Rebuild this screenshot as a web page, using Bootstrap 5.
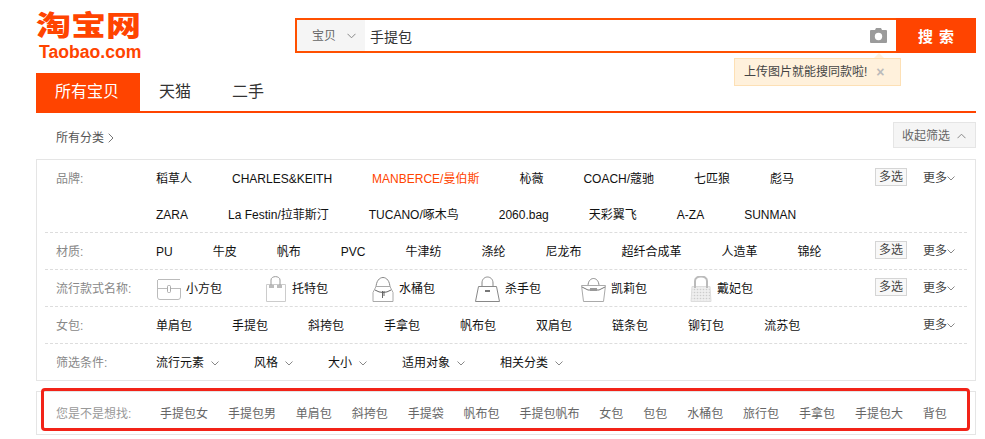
<!doctype html>
<html lang="zh">
<head>
<meta charset="utf-8">
<title>淘宝网</title>
<link href="https://cdn.jsdelivr.net/npm/bootstrap@5.3.0/dist/css/bootstrap.min.css" rel="stylesheet">
<style>
html,body{height:439px;overflow:hidden;background:#fff}
body{font-family:"Liberation Sans","Noto Sans CJK SC",sans-serif;font-size:12px;line-height:16px;color:#222}
.pg{width:940px;margin-left:36px;position:relative}
.top{height:73px;padding-top:13px}
.logo{width:259px;color:#ff4400;flex:none}
.logo-cn{font-family:"Liberation Sans","Noto Sans CJK SC",sans-serif;font-weight:900;font-size:28px;line-height:27px;height:30px;width:106px;white-space:nowrap;transform:scaleX(1.25);transform-origin:0 0}
.logo-en{font-weight:700;font-size:17.6px;line-height:18px;margin:0 0 0 3px}
.srch{height:35px;margin-top:5px;width:681px;border:2px solid #ff5000;border-right:0;position:relative}
.scope{width:68px;background:#f5f5f5;color:#666;padding-left:15px;gap:11px;font-size:12px}
.q{font-size:14px;padding-left:5px;color:#333;flex:1;font-family:"Noto Sans CJK SC",sans-serif}
.cam{margin-right:9px}
.go{width:80px;margin:-2px 0;background:#ff4400;color:#fff;font-weight:700;font-size:15px;letter-spacing:6px;padding-left:6px;font-family:"Noto Sans CJK SC",sans-serif}
.tip{position:absolute;left:437px;top:38px;width:167px;height:28px;background:#fff1dc;border:1px solid #fde0b5;color:#444;padding-left:9px;z-index:2}
.tip:before{content:"";position:absolute;left:139px;top:-6px;border:5px solid transparent;border-top:0;border-bottom:5px solid #fff1dc}
.tip-x{color:#bbb;font-weight:700;font-size:14px;margin-left:9px}
.tabs{height:40px;border-bottom:2px solid #ff4400;font-size:16px;color:#333}
.tab-on{width:104px;height:40px;background:#ff4400;color:#fff;text-align:center;line-height:38px;padding-right:2px}
.tab-it{margin-left:19px;width:32px;line-height:38px;white-space:nowrap}
.tab-it+.tab-it{margin-left:41px}
.crumb{height:46px;padding-left:20px;color:#555}
.crumb-l{padding-top:4px}
.fold{width:83px;height:26px;background:#f5f5f5;border:1px solid #e5e5e5;color:#666;padding:2px 0 0 8px;gap:7px;margin-top:-3px}
.fbox{border:1px solid #e5e5e5;padding:0 8px;height:222px}
.frow{border-bottom:1px dashed #ddd;position:relative}
.frow:last-child{border-bottom:0}
.flab{width:111px;padding-left:11px;color:#888;flex:none;height:36px;line-height:38px}
.flist{gap:0 40px;flex-wrap:wrap;width:700px;color:#111}
.flist span{height:36px;line-height:38px;white-space:nowrap}
.flist .red{color:#ff4400}
.opts{gap:0 35px}
.side{position:absolute;right:12px;top:0;height:36px;width:80px}
.multi{position:absolute;left:0;top:8px;width:32px;height:18px;border:1px solid #d5d5d5;background:#f8f8f8;text-align:center;line-height:17px;color:#444}
.more{position:absolute;left:48px;top:10px;color:#444;white-space:nowrap}
.flist .stl{line-height:16px;padding-top:2px}
.stl svg{margin-right:5px;flex:none}
.nudge1{margin-left:1px}
.nudge3{margin-left:3px}
.nudge4{margin-left:4px}
.flist .opt{gap:7px;line-height:16px;padding-top:2px}
.sugg{margin-top:10px;border:1px solid #e5e5e5;height:44px;padding:2px 0 0 19px;color:#666}
.sugg-lab{width:104px;color:#999}
.sugg-list{gap:19.9px;white-space:nowrap}
.hl{position:absolute;left:5px;top:388px;width:929px;height:43px;border:3px solid #f22318;border-radius:4px;pointer-events:none}
</style>
</head>
<body>
<div class="pg">
  <div class="top d-flex">
    <div class="logo">
      <div class="logo-cn">淘宝网</div>
      <div class="logo-en">Taobao.com</div>
    </div>
    <div class="srch d-flex align-items-stretch">
      <div class="scope d-flex align-items-center">宝贝
        <svg width="9" height="6" viewBox="0 0 9 6"><path d="M.5.8 4.5 4.8 8.5.8" fill="none" stroke="#888"/></svg>
      </div>
      <div class="q d-flex align-items-center">手提包</div>
      <div class="cam d-flex align-items-center">
        <svg width="17" height="15" viewBox="0 0 17 15"><path d="M6 0h5l1 2h4a1 1 0 0 1 1 1v11a1 1 0 0 1-1 1H1a1 1 0 0 1-1-1V3a1 1 0 0 1 1-1h4z" fill="#9b9b9b"/><circle cx="8.500" cy="8.500" r="3.700" fill="#fff"/></svg>
      </div>
      <div class="go d-flex align-items-center justify-content-center">搜索</div>
      <div class="tip d-flex align-items-center">上传图片就能搜同款啦!<span class="tip-x">×</span></div>
    </div>
  </div>
  <div class="tabs d-flex">
    <div class="tab-on">所有宝贝</div>
    <div class="tab-it">天猫</div>
    <div class="tab-it">二手</div>
  </div>
  <div class="crumb d-flex justify-content-between align-items-center">
    <div class="crumb-l d-flex align-items-center gap-1">所有分类
      <svg width="6" height="10" viewBox="0 0 6 10"><path d="M.7.7 5 5 .7 9.3" fill="none" stroke="#777"/></svg>
    </div>
    <div class="fold d-flex align-items-center">收起筛选
      <svg width="9" height="6" viewBox="0 0 9 6"><path d="M.5 5.200 4.500 1.200 8.500 5.200" fill="none" stroke="#888"/></svg>
    </div>
  </div>
  <div class="fbox">
    <div class="frow d-flex">
      <div class="flab">品牌:</div>
      <div class="flist d-flex">
        <span>稻草人</span><span>CHARLES&amp;KEITH</span><span class="red">MANBERCE/曼伯斯</span><span>杺薇</span><span>COACH/蔻驰</span><span>七匹狼</span><span>彪马</span>
        <span>ZARA</span><span>La Festin/拉菲斯汀</span><span>TUCANO/啄木鸟</span><span>2060.bag</span><span>天彩翼飞</span><span>A-ZA</span><span>SUNMAN</span>
      </div>
      <div class="side"><span class="multi">多选</span><span class="more">更多<svg width="8" height="5" viewBox="0 0 8 5"><path d="M.5.5 4 4 7.500.5" fill="none" stroke="#888"/></svg></span></div>
    </div>
    <div class="frow d-flex">
      <div class="flab">材质:</div>
      <div class="flist d-flex">
        <span>PU</span><span>牛皮</span><span>帆布</span><span>PVC</span><span>牛津纺</span><span>涤纶</span><span>尼龙布</span><span>超纤合成革</span><span>人造革</span><span>锦纶</span>
      </div>
      <div class="side"><span class="multi">多选</span><span class="more">更多<svg width="8" height="5" viewBox="0 0 8 5"><path d="M.5.5 4 4 7.500.5" fill="none" stroke="#888"/></svg></span></div>
    </div>
    <div class="frow d-flex">
      <div class="flab">流行款式名称:</div>
      <div class="flist d-flex">
        <span class="stl d-flex align-items-center nudge1">
          <svg width="24" height="21" viewBox="0 0 24 21"><path d="M1 .5h22M.500 1v17a2.500 2.500 0 0 0 2.500 2.500h18a2.500 2.500 0 0 0 2.500-2.500V9M.500 9.500H10M14 9.500h10" fill="none" stroke="#bbb"/><rect x="10.500" y="6.500" width="3" height="7" rx="1" fill="#fff" stroke="#aaa"/></svg>小方包</span>
        <span class="stl d-flex align-items-center nudge3">
          <svg width="22" height="26" viewBox="0 0 22 26"><path d="M1.500 8.500h19v17h-19z" fill="#fff" stroke="#ccc"/><path d="M6 11V4c0-4.500 9-4.500 9 0v7" fill="none" stroke="#999"/><path d="M4 9h5v3H4zM12 9h5v3h-5z" fill="#bbb"/></svg>托特包</span>
        <span class="stl d-flex align-items-center nudge4">
          <svg width="22" height="26" viewBox="0 0 22 26"><path d="M4 12C4-2 18-2 18 12" fill="none" stroke="#888"/><path d="M4 10.500h14l3 6v9H1v-9z" fill="#fff" stroke="#aaa"/><path d="M3 14q8 5 16 0M10.500 15v7M12 15v5" fill="none" stroke="#666"/></svg>水桶包</span>
        <span class="stl d-flex align-items-center">
          <svg width="25" height="26" viewBox="0 0 25 26"><path d="M7 12V7c0-8 11-8 11 0v5" fill="none" stroke="#888"/><path d="M3.500 10.500h18l3 15H.500z" fill="#fff" stroke="#888"/><path d="M10 15h5" stroke="#777" stroke-width="2"/></svg>杀手包</span>
        <span class="stl d-flex align-items-center">
          <svg width="25" height="26" viewBox="0 0 25 26"><path d="M7 10C7 0 18 0 18 10" fill="none" stroke="#888"/><path d="M.500 9.500h24l-2 16h-20z" fill="#fff" stroke="#aaa"/><path d="M1 11l6 3h11l6-3" fill="none" stroke="#777"/><path d="M9 12h7v3H9z" fill="#999"/></svg>凯莉包</span>
        <span class="stl d-flex align-items-center nudge3">
          <svg width="22" height="26" viewBox="0 0 22 26"><defs><pattern id="q" width="3" height="3" patternUnits="userSpaceOnUse"><path d="M0 0h3v3H0z" fill="#eee"/><circle cx="1.500" cy="1.500" r=".8" fill="#ccc"/></pattern></defs><path d="M2 10.500h18l1 15H1z" fill="url(#q)" stroke="#ddd"/><path d="M5 12V5c0-6 12-6 12 0v7" fill="none" stroke="#bbb" stroke-width="2"/></svg>戴妃包</span>
      </div>
      <div class="side"><span class="multi">多选</span><span class="more">更多<svg width="8" height="5" viewBox="0 0 8 5"><path d="M.5.5 4 4 7.500.5" fill="none" stroke="#888"/></svg></span></div>
    </div>
    <div class="frow d-flex">
      <div class="flab">女包:</div>
      <div class="flist d-flex">
        <span>单肩包</span><span>手提包</span><span>斜挎包</span><span>手拿包</span><span>帆布包</span><span>双肩包</span><span>链条包</span><span>铆钉包</span><span>流苏包</span>
      </div>
      <div class="side"><span class="more">更多<svg width="8" height="5" viewBox="0 0 8 5"><path d="M.5.5 4 4 7.500.5" fill="none" stroke="#888"/></svg></span></div>
    </div>
    <div class="frow d-flex">
      <div class="flab">筛选条件:</div>
      <div class="flist d-flex opts">
        <span class="opt d-flex align-items-center">流行元素<svg width="8" height="5" viewBox="0 0 8 5"><path d="M.5.5 4 4 7.500.5" fill="none" stroke="#888"/></svg></span>
        <span class="opt d-flex align-items-center">风格<svg width="8" height="5" viewBox="0 0 8 5"><path d="M.5.5 4 4 7.500.5" fill="none" stroke="#888"/></svg></span>
        <span class="opt d-flex align-items-center">大小<svg width="8" height="5" viewBox="0 0 8 5"><path d="M.5.5 4 4 7.500.5" fill="none" stroke="#888"/></svg></span>
        <span class="opt d-flex align-items-center">适用对象<svg width="8" height="5" viewBox="0 0 8 5"><path d="M.5.5 4 4 7.500.5" fill="none" stroke="#888"/></svg></span>
        <span class="opt d-flex align-items-center">相关分类<svg width="8" height="5" viewBox="0 0 8 5"><path d="M.5.5 4 4 7.500.5" fill="none" stroke="#888"/></svg></span>
      </div>
    </div>
  </div>
  <div class="sugg d-flex align-items-center">
    <div class="sugg-lab">您是不是想找:</div>
    <div class="sugg-list d-flex">
      <span>手提包女</span><span>手提包男</span><span>单肩包</span><span>斜挎包</span><span>手提袋</span><span>帆布包</span><span>手提包帆布</span><span>女包</span><span>包包</span><span>水桶包</span><span>旅行包</span><span>手拿包</span><span>手提包大</span><span>背包</span>
    </div>
  </div>
  <div class="hl"></div>
</div>
</body>
</html>
